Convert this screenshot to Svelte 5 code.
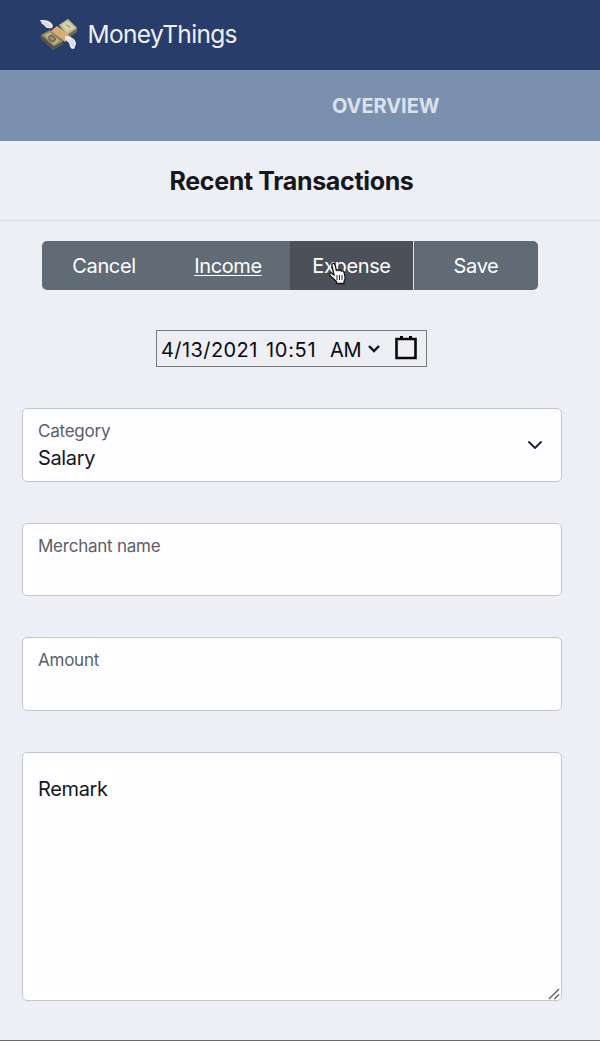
<script>
  const actions = ['Cancel', 'Income', 'Expense', 'Save'];
  const selected = 'Income';
  const hovered = 'Expense';
  const fields = ['Merchant name', 'Amount'];
</script>

<div class="page">
  <header>
    <svg class="logo" width="40" height="34" viewBox="0 0 40 34">
      <g stroke-linejoin="round">
        <path d="m20 7 9-6 9 9v4l-11 7z" fill="#726d55" />
        <path d="m20 7 9-6 9 9-10 7z" fill="#c2be94" />
        <path d="m23 7 6-4 6 7-7 4z" fill="#d6d3aa" />
        <path d="m27 7 3 1 1 2" fill="none" stroke="#96906b" />
        <path d="m2 17 9-5 13 12v2l-10 6L2 21z" fill="#5c5644" />
        <path d="m2 17 9-5 13 11-9 6z" fill="#8f8765" />
        <path d="m5 17 6-3 10 9-6 4z" fill="#b8af85" />
        <ellipse cx="13" cy="20.5" rx="3.6" ry="2.8" fill="#8a8262" stroke="#514b39" stroke-width=".8" transform="rotate(38 13 20.5)" />
        <path d="m12 19.5 2 2" fill="none" stroke="#c9c094" />
        <path d="m3 20 12 9 8-4" fill="none" stroke="#4e4939" />
        <path d="m14 31 8-4" fill="none" stroke="#2aa58c" stroke-dasharray="1 2" />
        <path d="m12 13 6-5 14 11-6 5z" fill="#d8ab70" />
        <path d="m13 13 5-4 11 9" fill="none" stroke="#e0b67c" />
        <path d="M1 2c5 0 11 0 13 6l-1 2c-5 1-7-1-8-3L3 6z" fill="#e9eaf0" />
        <path d="m3 4 8 3m-5 0 6 2" fill="none" stroke="#c0c2cc" stroke-width=".7" />
        <path d="M26 18c6 0 11 3 11 8l-2 5c-4 0-4-3-5-6l-4-4z" fill="#ececf2" />
        <path d="m30 21 4 7m-1-7 2 7" fill="none" stroke="#bfc2cd" stroke-width=".7" />
      </g>
    </svg>
    <span class="brand">MoneyThings</span>
  </header>
  <nav><span>OVERVIEW</span></nav>
  <h1><span>Recent Transactions</span></h1>

  <main>
    <div class="actions">
      {#each actions as action}
        <button class:selected={action === selected} class:hovered={action === hovered}>
          <span>{action}</span>
          {#if action === hovered}
            <svg class="pointer" width="20" height="24" viewBox="0 0 20 24">
              <path d="M6 13 4 4c-.6-3 2.4-3.5 3-.8l1.4 5.2c1-1 2-.7 2.5.2 1.1-.8 2.1-.4 2.5.5 1.2-.7 2.3-.1 2.6 1.2l1 4.2c.5 2.2-.3 3.7-1 5v2H8.5v-2L2 13.5c-1.4-2 .7-3.4 2.2-1.8z" fill="#fff" stroke="#161616" stroke-width="1.3" />
              <path d="M9 13v5m2.5-5v5m2.5-5v5" stroke="#222" />
            </svg>
          {/if}
        </button>
      {/each}
    </div>

    <div class="datetime">
      <span class="date">4/13/2021</span><span class="time">10:51</span><span class="ampm">AM</span>
      <svg class="tick" width="14" height="10" viewBox="0 0 14 10"><path d="m2 2 5 5 5-5" fill="none" stroke="#111" stroke-width="2.4" /></svg>
      <svg class="calendar" width="24" height="26" viewBox="0 0 24 26">
        <path d="M2.5 4h19v19h-19z" fill="none" stroke="#080808" stroke-width="2.6" />
        <path d="M6 1h3v4H6zm9 0h3v4h-3z" fill="#080808" />
      </svg>
    </div>

    <div class="field select">
      <label><span>Category</span></label>
      <div class="value"><span>Salary</span></div>
      <svg class="chevron" width="16" height="12" viewBox="0 0 16 12"><path d="m2 3 6 6 6-6" fill="none" stroke="#20242a" stroke-width="1.9" stroke-linecap="round" stroke-linejoin="round" /></svg>
    </div>
    {#each fields as field}
      <div class="field"><label><span>{field}</span></label></div>
    {/each}
    <div class="field remark">
      <span>Remark</span>
      <svg class="grip" width="12" height="12" viewBox="0 0 12 12"><path d="m1 11 10-10M6.5 11 11 6.5" stroke="#555" stroke-width="1.2" /></svg>
    </div>
  </main>
</div>

<style>
  :global(body) { background: #edeff5; }
  * { box-sizing: border-box; }
  .page { width: 600px; height: 1041px; overflow: hidden; border-bottom: 1px solid #66686d; background: #edeff5; color: #15171c; font-family: Inter, "Liberation Sans", sans-serif; font-size: 20px; }
  header { height: 70px; padding: 18px 0 0 39px; display: flex; background: #283d6a; color: #edf0f7; }
  .logo { flex: none; }
  .brand { margin-left: 8.5px; font-size: 24.5px; line-height: 33px; letter-spacing: -.67px; }
  nav { height: 71px; padding-left: 332px; display: flex; align-items: center; background: #7b90af; color: #dce2ec; font-weight: 700; font-size: 20px; letter-spacing: -.05px; }
  h1 { margin: 0; height: 80px; border-bottom: 1px solid #d9dbe1; padding-left: 169.5px; display: flex; align-items: center; font-size: 25px; font-weight: 700; letter-spacing: -.34px; }
  main { padding: 20px 0 0 21.5px; }
  .actions { display: flex; width: 496px; height: 49px; margin-left: 20.5px; border-radius: 5px; overflow: hidden; }
  button { position: relative; width: 124px; padding: 0; border: 0; background: #606b75; color: #fff; font: 20px/51px Inter, "Liberation Sans", sans-serif; letter-spacing: -.36px; }
  .selected { text-decoration: underline; text-decoration-thickness: 1px; text-underline-offset: 2px; }
  .hovered { background: #4c5058; border-right: 1px solid #dfe2e5; }
  .pointer { position: absolute; left: 38px; top: 21px; }
  .datetime { width: 271px; height: 37px; margin: 40px 0 0 134.5px; padding: 2px 0 0 4px; border: 1px solid #77797d; display: flex; align-items: center; color: #090a0c; font-size: 20px; }
  .date { letter-spacing: .42px; width: 105px; white-space: nowrap; }
  .time { letter-spacing: .7px; width: 64px; }
  .ampm { width: 37px; letter-spacing: -.4px; }
  .tick { margin-top: -2px; }
  .calendar { margin-left: 13px; margin-top: -3px; }
  .field { position: relative; width: 540px; height: 73.5px; margin-top: 41px; padding: 11.4px 15.5px; border: 1px solid #c3c7d0; border-radius: 5px; background: #fefdff; }
  label { display: block; height: 22px; line-height: 22px; font-size: 17px; letter-spacing: -.24px; color: #5c5f64; }
  .value { line-height: 26px; margin-top: 3px; letter-spacing: -.35px; }
  .select { margin-top: 41px; }
  .chevron { position: absolute; right: 18px; top: 30px; }
  .remark { height: 249.5px; padding-top: 23.5px; line-height: 26px; letter-spacing: -.35px; }
  .grip { position: absolute; right: 1px; bottom: 0; }
</style>
